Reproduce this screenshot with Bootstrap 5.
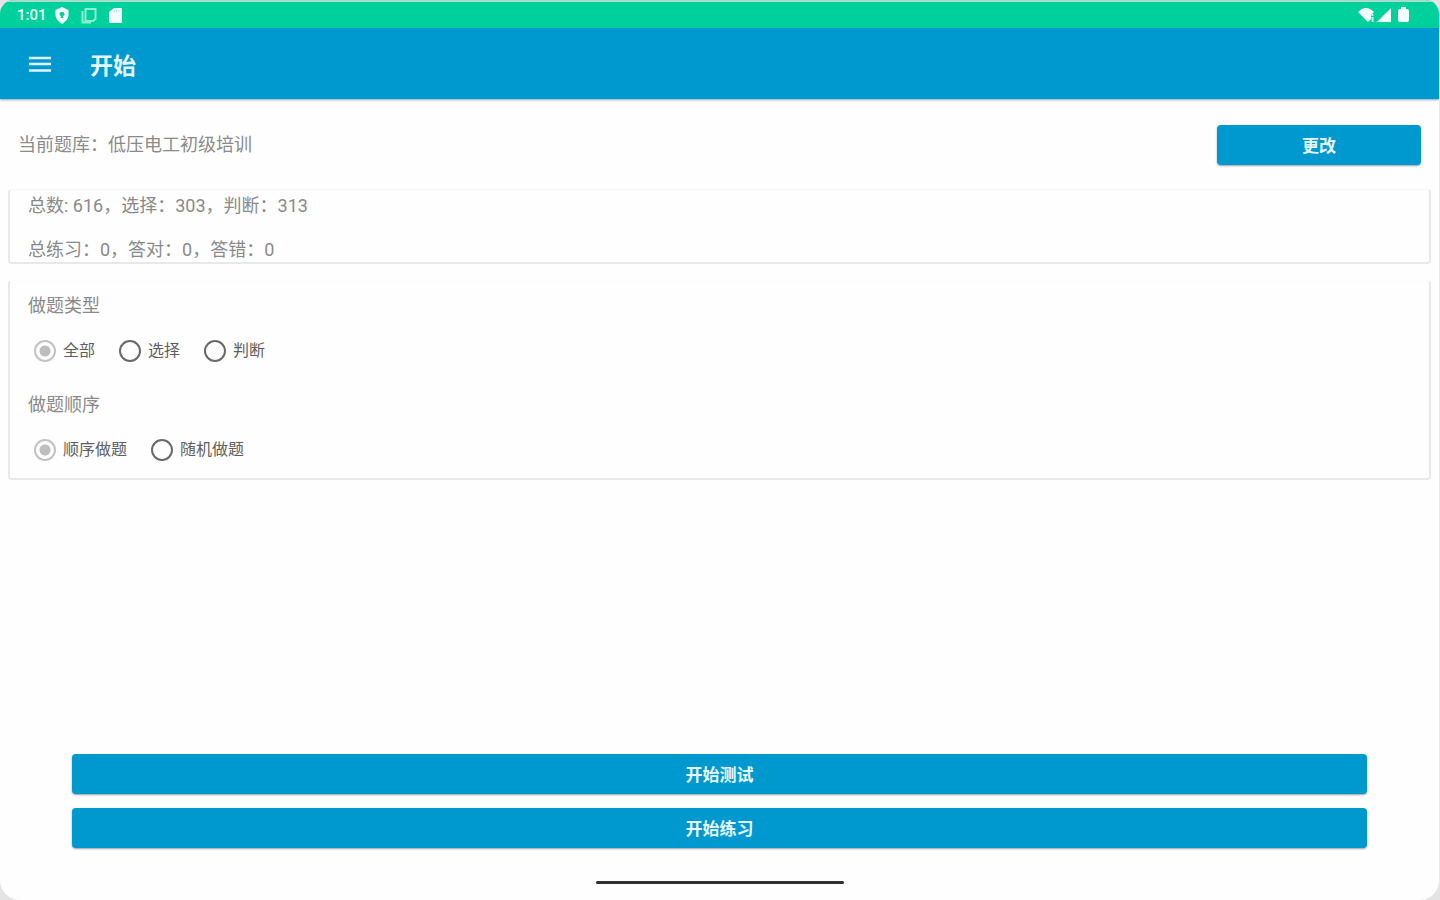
<!DOCTYPE html>
<html lang="zh-CN">
<head>
<meta charset="utf-8">
<meta name="viewport" content="width=device-width, initial-scale=1">
<title>开始</title>
<link href="https://cdn.jsdelivr.net/npm/bootstrap@5.3.0/dist/css/bootstrap.min.css" rel="stylesheet">
<style>
  body { font-family: Roboto, "Noto Sans CJK SC", sans-serif; background: #e4e4e4; color: #8a8a8a; font-size: 18px; line-height: 26px; }
  .screen { background: #fefefe; border-radius: 14px 14px 20px 20px; overflow: hidden; border-right: 1px solid #e8e8ea; }
  .status-bar { height: 28px; background: #00d09c; border-top: 2px solid #a5dccb; padding: 0 29px 0 17px; font-size: 15px; line-height: 26px; font-weight: 500; color: #e8fff8; }
  .status-icons { gap: 11px; margin-left: 7px; }
  .app-bar { height: 71px; background: #0099cf; padding: 4px 28px 0; box-shadow: 0 1px 2px #7fa9c4; }
  .app-bar h1 { font-size: 23px; line-height: 32px; font-weight: 700; color: #e6f5fd; margin: 0 0 0 38px; padding-top: 2px; }
  .menu-btn { width: 24px; height: 24px; line-height: 0; }
  .bank-row { padding: 26px 18px 24px; }
  .btn-fill { background: #0099cf; color: #e6f6fd; border: 0; border-radius: 4px; height: 40px; padding: 2px 0 0; font-size: 17px; line-height: 24px; font-weight: 700; box-shadow: 0 1px 2px #9a9fa5; }
  .btn-fill:hover { background: #0088ba; color: #fff; }
  .change-btn { width: 204px; }
  .panel { background: #fefefe; margin: 0 8px 16px; border-radius: 4px; border: solid #e8e8e8; border-width: 1px 2px 2px; border-top-color: #f7f7f7; }
  .panel p, .panel legend { font-size: 18px; line-height: 24px; color: #8a8a8a; }
  .stats { padding: 4px 18px 0; }
  .stats p + p { margin-top: 20px; }
  .options { padding: 13px 18px 8px; border-top-color: #fcfcfc; }
  .options fieldset + fieldset { margin-top: 22px; }
  .choices { padding: 22px 0 9px 6px; gap: 24px; }
  .choices label { font-size: 16px; line-height: 22px; color: #5e5e5e; margin-left: 7px; }
  .choices .form-check-input { width: 22px; height: 22px; margin: 0; border: 2px solid #6a6a6a; background-color: transparent; }
  .choices .form-check-input:checked { border-color: #c2c2c2; background: radial-gradient(circle, #bdbdbd 5px, transparent 6px); }
  .actions { padding: 0 72px; margin-bottom: 33px; gap: 14px; }
  .home-line { width: 248px; height: 3px; border-radius: 2px; background: #303030; margin-bottom: 16px; }
</style>
</head>
<body>
<div class="screen min-vh-100 d-flex flex-column">
  <div class="status-bar d-flex align-items-center justify-content-between">
    <div class="d-flex align-items-center">
      <span>1:01</span>
      <div class="status-icons d-flex align-items-center">
      <svg width="16" height="17" viewBox="0 0 16 17" fill="#f4fffb"><path fill-rule="evenodd" d="M8 0 14.500 3V8C14.500 12 11 15 8 17C5 15 1.500 12 1.500 8V3ZM8 5A2 2 0 0 0 7 9L6.500 11H9.500L9 9A2 2 0 0 0 8 5Z"/></svg>
      <svg width="16" height="17" viewBox="0 0 16 17" fill="none" stroke="#8deed2" stroke-width="2"><path d="M4.500 2H14.500V12L12 14H4.500ZM1.500 4V15.500H10"/></svg>
      <svg width="15" height="17" viewBox="0 0 15 17" fill="#f4fffb"><path d="M6 1H13Q14 1 14 2V15Q14 16 13 16H2Q1 16 1 15V5Z"/><path d="M6 3V5M8.500 3V5M11 3V5" stroke="#a5eed8"/></svg>
      </div>
    </div>
    <svg width="52" height="18" viewBox="0 0 52 18" fill="#f4fffb"><path d="M0 6Q8-2 16 6L13 9V13L10 16Z"/><path d="M14.500 8V10M14.500 11V16" stroke="#c5fbeb" stroke-width="2"/><path d="M19 16 33 2V16Z"/><path d="M42 3H43V1H48V3H49Q51 3 51 5V14Q51 16 49 16H42Q40 16 40 14V5Q40 3 42 3Z"/></svg>
  </div>
  <header class="app-bar d-flex align-items-center">
    <button type="button" class="menu-btn btn border-0 p-0" aria-label="菜单">
      <svg width="24" height="24" viewBox="0 0 24 24" stroke="#e2f4fd" stroke-width="2.500"><path d="M1 4H23M1 10H23M1 16.500H23"/></svg>
    </button>
    <h1>开始</h1>
  </header>
  <main class="flex-grow-1 d-flex flex-column">
    <div class="bank-row d-flex align-items-center justify-content-between">
      <span>当前题库：低压电工初级培训</span>
      <button type="button" class="btn btn-fill change-btn">更改</button>
    </div>
    <section class="panel stats">
      <p class="mb-0">总数: 616，选择：303，判断：313</p>
      <p class="mb-0">总练习：0，答对：0，答错：0</p>
    </section>
    <form class="panel options">
      <fieldset>
        <legend class="mb-0">做题类型</legend>
        <div class="choices d-flex align-items-center">
          <div class="d-flex align-items-center"><input class="form-check-input" type="radio" name="kind" id="kAll" checked><label for="kAll">全部</label></div>
          <div class="d-flex align-items-center"><input class="form-check-input" type="radio" name="kind" id="kChoice"><label for="kChoice">选择</label></div>
          <div class="d-flex align-items-center"><input class="form-check-input" type="radio" name="kind" id="kJudge"><label for="kJudge">判断</label></div>
        </div>
      </fieldset>
      <fieldset>
        <legend class="mb-0">做题顺序</legend>
        <div class="choices d-flex align-items-center">
          <div class="d-flex align-items-center"><input class="form-check-input" type="radio" name="order" id="oSeq" checked><label for="oSeq">顺序做题</label></div>
          <div class="d-flex align-items-center"><input class="form-check-input" type="radio" name="order" id="oRand"><label for="oRand">随机做题</label></div>
        </div>
      </fieldset>
    </form>
    <div class="actions d-grid mt-auto">
      <button type="button" class="btn btn-fill">开始测试</button>
      <button type="button" class="btn btn-fill">开始练习</button>
    </div>
    <div class="home-line mx-auto"></div>
  </main>
</div>
<script src="https://cdn.jsdelivr.net/npm/bootstrap@5.3.0/dist/js/bootstrap.bundle.min.js"></script>
</body>
</html>
